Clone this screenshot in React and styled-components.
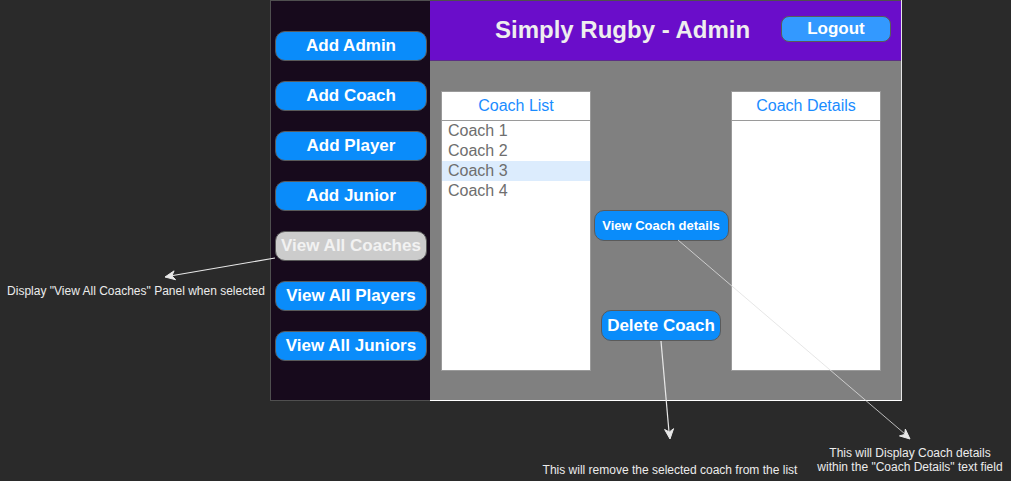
import styled, {createGlobalStyle} from "styled-components";

const GlobalStyle = createGlobalStyle`
  html, body {
    margin: 0;
    padding: 0;
    background-color: #2a2a2a;
    font-family: "Liberation Sans", Arial, sans-serif;
    overflow: hidden;
  }
`;

const Canvas = styled.div`
  position: relative;
  width: 1011px;
  height: 481px;
`;

const Frame = styled.div`
  display: flex;
  margin-left: 270px;
  width: 632px;
  height: 401px;
`;

const Sidebar = styled.nav`
  box-sizing: border-box;
  width: 160px;
  height: 401px;
  background-color: #170a1c;
  border: 1px solid #4f4f4f;
  border-right: none;
  padding: 30px 0 0 4px;

  display: flex;
  flex-direction: column;
  gap: 20px;
`;

const NavButton = styled.button`
  box-sizing: border-box;
  flex-shrink: 0;
  width: 152px;
  height: 30px;
  border-radius: 10px;
  border: 1px solid #5a5a5a;
  background-color: ${p => (p.$active ? "#cccccc" : "#0a8cfa")};
  color: ${p => (p.$active ? "#f2f2f2" : "#ffffff")};
  font-family: "Liberation Sans", Arial, sans-serif;
  font-weight: bold;
  font-size: 17px;
  padding: 0;
`;

const Main = styled.main`
  box-sizing: border-box;
  width: 472px;
  height: 401px;
  background-color: #808080;
  border-right: 1px solid #e6e6e6;
  border-bottom: 1px solid #ffffff;
  display: flex;
  flex-direction: column;
`;

const Header = styled.header`
  box-sizing: border-box;
  flex-shrink: 0;
  height: 61px;
  background-color: #6a0dca;
  border-top: 1px solid #4f4f4f;
  border-bottom: 1px solid #5c2d87;
  display: flex;
  align-items: center;
  padding-left: 65px;
  padding-right: 10px;
`;

const Title = styled.h1`
  margin: 0 0 2px 0;
  color: #eeeeee;
  font-size: 24px;
  font-weight: bold;
`;

const Logout = styled.button`
  margin-left: auto;
  margin-top: -3px;
  box-sizing: border-box;
  width: 110px;
  height: 26px;
  border-radius: 8px;
  border: 1px solid #5a5a5a;
  background-color: #3399ff;
  color: #ffffff;
  font-family: "Liberation Sans", Arial, sans-serif;
  font-weight: bold;
  font-size: 17px;
  padding: 0;
`;

const Body = styled.div`
  display: grid;
  grid-template-columns: 150px 140px 150px;
  padding: 30px 0 0 11px;
`;

const Panel = styled.div`
  box-sizing: border-box;
  width: 150px;
  height: 280px;
  background-color: #ffffff;
  border: 1px solid #9a9a9a;
`;

const PanelTitle = styled.div`
  height: 28px;
  border-bottom: 1px solid #9a9a9a;
  color: #1a8cff;
  font-size: 16px;
  line-height: 28px;
  text-align: center;
`;

const Item = styled.div`
  height: 20px;
  line-height: 20px;
  padding-left: 6px;
  font-size: 16px;
  color: #6e6e6e;
  background-color: ${p => (p.$selected ? "#dcecfd" : "transparent")};
`;

const Middle = styled.div`
  display: flex;
  flex-direction: column;
  align-items: center;
  gap: 69px;
  padding-top: 119px;
`;

const ActionButton = styled.button`
  box-sizing: border-box;
  width: ${p => p.$w}px;
  height: 31px;
  border-radius: 10px;
  border: 1px solid #5a5a5a;
  background-color: #0a8cfa;
  color: #ffffff;
  font-family: "Liberation Sans", Arial, sans-serif;
  font-weight: bold;
  font-size: ${p => p.$size}px;
  padding: 0;
`;

const Note = styled.div`
  position: absolute;
  left: ${p => p.$x}px;
  top: ${p => p.$y}px;
  width: ${p => p.$w}px;
  color: #ececec;
  font-size: 12px;
  line-height: 14px;
  text-align: center;
  white-space: nowrap;
`;

const Arrows = styled.svg`
  position: absolute;
  left: 0;
  top: 0;
  pointer-events: none;
`;

const navItems = [
    "Add Admin",
    "Add Coach",
    "Add Player",
    "Add Junior",
    "View All Coaches",
    "View All Players",
    "View All Juniors",
];

const coaches = ["Coach 1", "Coach 2", "Coach 3", "Coach 4"];

// arrow head pointing at (x, y), coming from (fx, fy)
const Head = ({x, y, fx, fy, color}) => {
    const a = Math.atan2(y - fy, x - fx);
    const len = 10, w = 4.5;
    const bx = x - len * Math.cos(a), by = y - len * Math.sin(a);
    const nx = -Math.sin(a), ny = Math.cos(a);
    const mx = x - 7 * Math.cos(a), my = y - 7 * Math.sin(a);
    const pts = `${x},${y} ${bx + nx * w},${by + ny * w} ${mx},${my} ${bx - nx * w},${by - ny * w}`;
    return <polygon points={pts} fill={color} stroke={color} strokeWidth="1" />;
};

const App = () => {
    return (
        <Canvas>
            <GlobalStyle />
            <Frame>
                <Sidebar>
                    {navItems.map(label => (
                        <NavButton key={label} $active={label === "View All Coaches"}>
                            {label}
                        </NavButton>
                    ))}
                </Sidebar>
                <Main>
                    <Header>
                        <Title>Simply Rugby - Admin</Title>
                        <Logout>Logout</Logout>
                    </Header>
                    <Body>
                        <Panel>
                            <PanelTitle>Coach List</PanelTitle>
                            {coaches.map(c => (
                                <Item key={c} $selected={c === "Coach 3"}>{c}</Item>
                            ))}
                        </Panel>
                        <Middle>
                            <ActionButton $w={135} $size={13}>View Coach details</ActionButton>
                            <ActionButton $w={120} $size={17}>Delete Coach</ActionButton>
                        </Middle>
                        <Panel>
                            <PanelTitle>Coach Details</PanelTitle>
                        </Panel>
                    </Body>
                </Main>
            </Frame>

            <Arrows width="1011" height="481">
                <line x1="275" y1="258" x2="170" y2="276" stroke="#e8e8e8" strokeWidth="1.2" />
                <Head x={165} y={277} fx={275} fy={258} color="#e8e8e8" />
                <line x1="661" y1="341" x2="669" y2="432" stroke="#e8e8e8" strokeWidth="1.2" />
                <Head x={670} y={439} fx={661} fy={341} color="#e8e8e8" />
                <line x1="678" y1="240" x2="905" y2="434" stroke="#e0e0e0" strokeWidth="0.8" />
                <Head x={910} y={439} fx={678} fy={240} color="#e8e8e8" />
            </Arrows>

            <Note $x={0} $y={284} $w={272}>Display "View All Coaches" Panel when selected</Note>
            <Note $x={530} $y={463} $w={280}>This will remove the selected coach from the list</Note>
            <Note $x={810} $y={446} $w={200}>
                This will Display Coach details<br />within the "Coach Details" text field
            </Note>
        </Canvas>
    );
};

export default App;
